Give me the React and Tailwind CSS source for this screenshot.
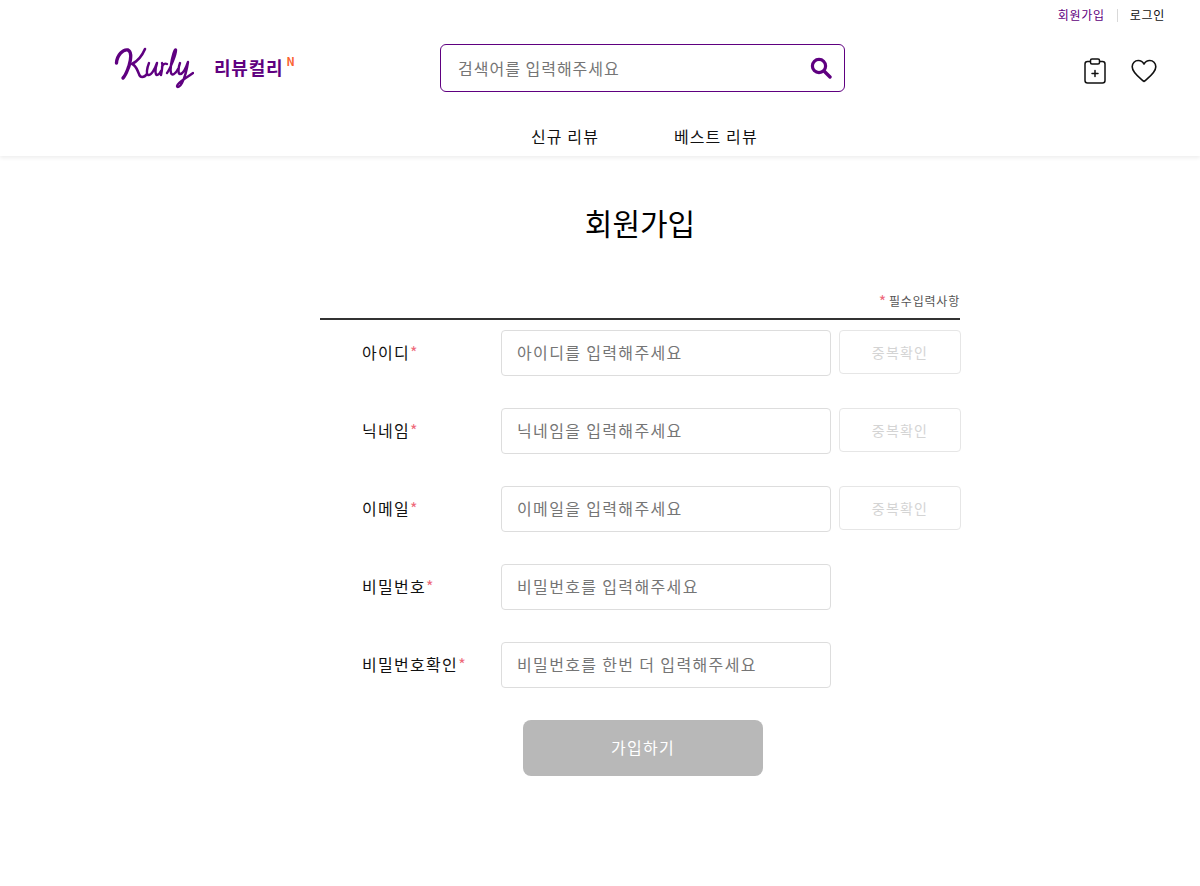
import React from 'react';

const font = "font-['Noto_Sans_CJK_KR','Noto_Sans',sans-serif]";

const fields = [
  { label: '아이디', placeholder: '아이디를 입력해주세요', check: true },
  { label: '닉네임', placeholder: '닉네임을 입력해주세요', check: true },
  { label: '이메일', placeholder: '이메일을 입력해주세요', check: true },
  { label: '비밀번호', placeholder: '비밀번호를 입력해주세요', check: false },
  { label: '비밀번호확인', placeholder: '비밀번호를 한번 더 입력해주세요', check: false },
];

const KurlyLogo = () => (
  <svg width="80" height="42" viewBox="0 0 80 42" fill="none" stroke="#5f0080" strokeLinecap="round" strokeLinejoin="round" aria-label="Kurly">
    <path d="M2.5 16C3 8 9 2 14 3C18 5 17 12 15 19C13 24 12 28 9 31" strokeWidth="3.4" />
    <path d="M31 2C28 9 24 14 18 17C22 18 23 23 25 27C26 31 30 31 33 27" strokeWidth="2.6" />
    <path d="M35 16C33 21 32 27 34 28C37 29 41 22 43 16C41 22 41 28 43 28C44 28 46 26 47 24" strokeWidth="2.4" />
    <path d="M48 16C49 18 48 23 47 28M48 20C49 17 51 16 53 17" strokeWidth="2.4" />
    <path d="M53 26C56 22 62 8 62 3C61 0 58 10 57 18C56 25 57 29 60 27C62 26 63 24 64 22" strokeWidth="2.4" />
    <path d="M66 16C64 21 64 27 66 27C69 27 72 21 74 15C73 22 71 30 68 36C66 40 63 41 63 39C63 36 71 32 79 26" strokeWidth="2.4" />
  </svg>
);

const Header = () => (
  <header className="h-[156px] bg-white shadow-[0_2px_4px_rgba(0,0,0,0.07)]">
    <div className="flex h-[30px] items-center justify-end pr-[35px] text-xs tracking-[0.7px]">
      <span className="text-[#5f0080]">회원가입</span>
      <span className="mx-3 h-[13px] w-px bg-[#d9d9d9]" />
      <span className="text-[#111]">로그인</span>
    </div>
    <div className="flex h-[76px] items-center">
      <div className="ml-[114px] flex w-[326px] items-start">
        <KurlyLogo />
        <span className="ml-[20px] mt-[7px] text-lg font-bold leading-[26px] tracking-[0.8px] text-[#5f0080]">리뷰컬리</span>
        <span className="ml-[3px] mt-[7px] text-[11px] font-bold leading-[14px] text-[#fa622f]">N</span>
      </div>
      <div className="flex h-12 w-[405px] items-center rounded-md border border-[#5f0080] pl-[17px] pr-[12px]">
        <span className="flex-1 text-base tracking-[1px] text-[#757575]">검색어를 입력해주세요</span>
        <svg width="22" height="22" viewBox="0 0 22 22" fill="none" stroke="#5f0080" strokeLinecap="round">
          <circle cx="9" cy="9" r="6.6" strokeWidth="3.2" />
          <path d="M14 14L20 20" strokeWidth="3.4" />
        </svg>
      </div>
      <div className="ml-[237px] mt-[5px] flex items-center gap-[23px]">
        <svg width="26" height="28" viewBox="0 0 26 28" fill="none" stroke="#111" strokeWidth="1.5" strokeLinecap="round" strokeLinejoin="round">
          <path d="M8 4.5H5.5C4 4.5 3 5.5 3 7V23.5C3 25 4 26 5.5 26H20.5C22 26 23 25 23 23.5V7C23 5.5 22 4.5 20.5 4.5H18" />
          <rect x="8.5" y="2" width="9" height="5" rx="1.5" />
          <path d="M13 13.5V19.5M10 16.5H16" />
        </svg>
        <svg width="26" height="24" viewBox="0 0 26 24" fill="none" stroke="#111" strokeWidth="1.6" strokeLinejoin="round">
          <path d="M13 22.5C9 19 1.2 14 1.2 7.8C1.2 4 4 1.5 7.2 1.5C9.6 1.5 11.8 2.8 13 5C14.2 2.8 16.4 1.5 18.8 1.5C22 1.5 24.8 4 24.8 7.8C24.8 14 17 19 13 22.5Z" />
        </svg>
      </div>
    </div>
    <nav className="ml-[531px] flex h-[50px] items-center gap-[75px] pt-[10px] text-base tracking-[1.1px] text-[#111]">
      <span>신규 리뷰</span>
      <span>베스트 리뷰</span>
    </nav>
  </header>
);

const Field = ({ label, placeholder, check }) => (
  <div className="flex h-[46px] items-center">
    <label className="w-[181px] shrink-0 pb-[2px] pl-[42px] text-base tracking-[1.3px] text-[#111]">
      {label}
      <span className="text-[#ee6a7b]">*</span>
    </label>
    <div className="flex h-[46px] w-[330px] shrink-0 items-center rounded border border-[#dddddd] px-[15px] pb-[2px] text-base tracking-[1.35px] text-[#757575]">
      {placeholder}
    </div>
    {check && (
      <button className="ml-2 h-11 w-[122px] shrink-0 self-start rounded border border-[#e6e6e6] text-sm tracking-[1.2px] text-[#d4d4d4]">
        중복확인
      </button>
    )}
  </div>
);

export default function App() {
  return (
    <div className={`${font} min-h-[886px] bg-white`}>
      <Header />
      <main className="ml-[320px] w-[640px]">
        <h2 className="pt-[43px] text-center text-3xl leading-[46px] text-black">회원가입</h2>
        <div className="mt-[47px] flex h-[28px] items-center justify-end border-b-2 border-[#333] pb-[9px] text-xs tracking-[0.8px] text-[#555]">
          <span className="mr-[2px] text-base text-[#ee6a7b]">*</span>필수입력사항
        </div>
        <div className="mt-[10px] flex flex-col gap-8">
          {fields.map((f) => (
            <Field key={f.label} {...f} />
          ))}
        </div>
        <div className="mt-8 pl-[203px]">
          <button className="h-14 w-60 rounded-lg bg-[#b8b8b8] pb-[2px] text-base tracking-[1.3px] text-white">가입하기</button>
        </div>
      </main>
    </div>
  );
}
